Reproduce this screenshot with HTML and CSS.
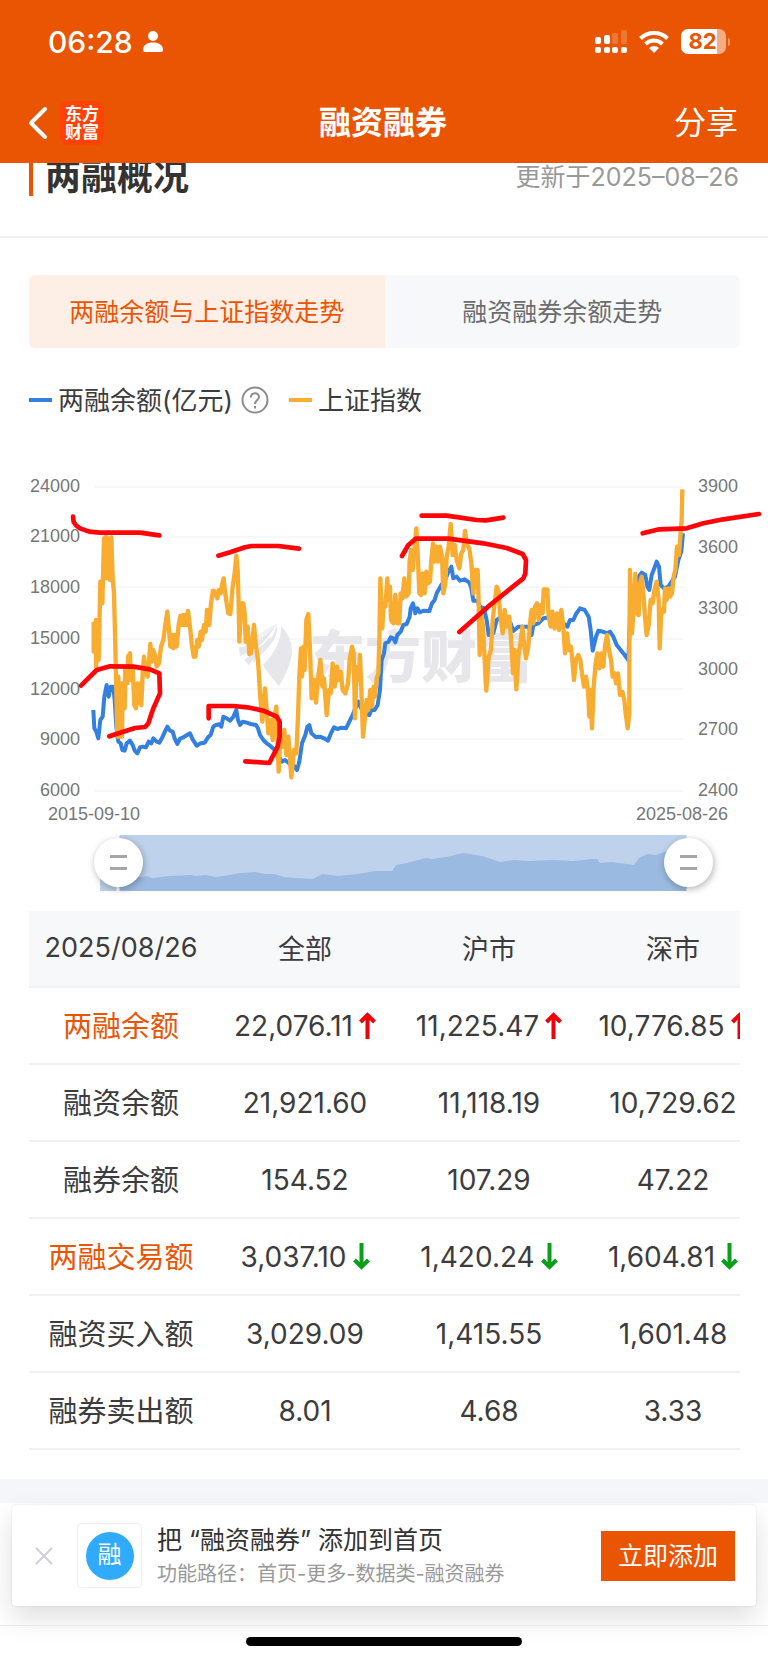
FILE: index.html
```html
<!DOCTYPE html>
<html lang="zh-CN">
<head>
<meta charset="utf-8">
<meta name="viewport" content="width=device-width, initial-scale=1">
<title>融资融券</title>
<link rel="stylesheet" href="styles.css">
</head>
<body>
<header class="top">
  <div class="status">
    <div class="status-side">
      <span class="time">06:28</span>
      <svg width="20" height="21" viewBox="0 0 20 21" fill="#fff" aria-hidden="true"><circle cx="10" cy="5" r="5"/><path d="M0 19C0 14 4 11.500 10 11.500S20 14 20 19Q20 21 18 21H2Q0 21 0 19Z"/></svg>
    </div>
    <div class="status-side status-right">
      <svg width="32" height="24" viewBox="0 0 32 24" fill="#fff" aria-hidden="true">
        <rect x="0" y="7" width="6" height="7" rx="2"/><rect x="9" y="5" width="6" height="9" rx="2"/>
        <g opacity=".2"><rect x="17" y="3" width="6" height="11" rx="2"/><rect x="26" y="0" width="6" height="14" rx="2"/></g>
        <rect x="0" y="17" width="6" height="6" rx="2"/><rect x="9" y="17" width="6" height="6" rx="2"/><rect x="17" y="17" width="6" height="6" rx="2"/><rect x="26" y="17" width="6" height="6" rx="2"/>
      </svg>
      <svg width="30" height="22" viewBox="0 0 30 22" aria-hidden="true"><g fill="none" stroke="#fff" stroke-width="4"><path d="M1.500 7.500C9 .300 21 .300 28.500 7.500"/><path d="M6.500 13C11.500 8.300 18.500 8.300 23.500 13"/></g><path d="M10 17C13 14.300 17 14.300 20 17L15 22Z" fill="#fff"/></svg>
      <span class="battery"><span class="battery-body">82</span><span class="battery-tip"></span></span>
    </div>
  </div>
  <nav class="nav">
    <div class="nav-left">
      <button class="plain" type="button" aria-label="返回"><svg width="20" height="34" viewBox="0 0 20 34" fill="none" stroke="#fff" stroke-width="4" stroke-linecap="round" stroke-linejoin="round"><path d="M17 3 3 17 17 31"/></svg></button>
      <span class="brand">东方<br>财富</span>
    </div>
    <h1 class="nav-title">融资融券</h1>
    <button class="plain share" type="button">分享</button>
  </nav>
</header>

<main>
  <section class="overview">
    <h2 class="overview-title">两融概况</h2>
    <span class="updated">更新于2025–08–26</span>
  </section>

  <div class="content">
    <div class="tabs" role="tablist">
      <button class="tab tab-active" type="button" role="tab" aria-selected="true">两融余额与上证指数走势</button>
      <button class="tab" type="button" role="tab" aria-selected="false">融资融券余额走势</button>
    </div>
    <div class="legend">
      <span class="key key-blue"></span><span class="legend-text">两融余额(亿元)</span>
      <svg class="help" width="28" height="28" viewBox="0 0 28 28" fill="none" stroke="#8c8c8c" stroke-width="2" aria-hidden="true"><circle cx="14" cy="14" r="12.500"/><path d="M10 11.500C10 6 18 6 18 11C18 14 14 14 14 18"/><path d="M14 20V22.500"/></svg>
      <span class="key key-gold"></span><span class="legend-text">上证指数</span>
    </div>
  </div>

  <div class="chart">
    <svg class="chart-svg" viewBox="0 0 768 440" role="img" aria-label="两融余额与上证指数走势">
      <g stroke="#f5f5f6" stroke-width="1.500"><path d="M95 27H683M95 77H683M95 127H683M95 179H683M95 229H683M95 279H683M95 331H683"/></g>
      <g fill="#e6e6eb">
        <path d="M239 187Q252 187 262 178Q271 171 275 165Q269 181 251 191Q246 194 240 196Z"/>
        <path d="M241 179Q255 178 265 170Q273 165 277 164Q270 176 254 183Q248 187 239 184Z" opacity=".5"/>
        <path d="M277 165Q279 178 263 193Q255 200 254 204Q251 198 259 191Q273 180 277 165Z"/>
        <path d="M281 166Q291 176 292 190Q292 204 279 226Q266 211 263 205Q282 186 281 166Z"/>
        <path d="M244 200Q261 188 271 176Q267 190 256 197Q249 204 250 206Z"/>
        <text class="watermark" x="309" y="217">东方财富</text>
      </g>
      <g fill="none" stroke-linejoin="round" transform="scale(.33333)">
        <polyline stroke="#3380e0" stroke-width="12" points="280,750 283,805 289,815 295,835 301,780 308,770 313,710 320,675 326,710 332,680 340,680 344,720 349,800 355,845 362,850 367,870 374,872 380,850 390,842 398,855 404,872 412,880 420,862 430,860 438,862 446,845 454,850 460,835 470,845 478,848 488,830 496,812 502,800 510,812 518,815 524,835 532,852 540,836 550,832 560,826 570,820 578,838 590,857 602,850 614,848 624,832 632,825 640,800 648,795 658,793 664,800 670,770 680,775 690,782 700,770 709,750 714,780 720,795 728,785 740,788 752,792 768,795 774,805 780,825 790,840 800,850 810,857 822,868 835,885 845,905 855,900 868,910 880,915 891,930 898,905 906,850 916,825 922,800 928,795 934,820 948,832 960,830 972,835 984,842 992,822 1002,802 1012,807 1025,803 1038,805 1048,785 1058,765 1066,745 1075,725 1090,760 1108,765 1114,750 1124,750 1133,735 1140,690 1145,600 1152,580 1156,550 1166,545 1172,532 1180,535 1186,547 1192,525 1202,515 1210,495 1220,492 1229,470 1232,445 1239,430 1246,460 1252,445 1260,457 1270,452 1288,453 1296,430 1304,420 1310,400 1324,375 1335,360 1348,330 1354,320 1360,355 1370,350 1380,362 1394,358 1408,368 1414,385 1420,422 1432,422 1440,440 1452,445 1460,480 1466,525 1480,520 1490,480 1505,470 1520,480 1532,490 1540,513 1555,500 1570,500 1585,500 1595,525 1600,495 1615,490 1630,475 1650,472 1670,490 1690,490 1702,500 1710,480 1720,480 1728,462 1740,445 1754,450 1766,470 1772,510 1778,572 1788,530 1795,512 1810,515 1820,520 1830,515 1840,530 1850,555 1862,570 1874,585 1885,600 1890,480 1905,390 1916,350 1925,338 1936,345 1942,380 1948,390 1955,345 1963,325 1970,305 1977,320 1982,375 1992,385 2005,380 2015,365 2025,350 2035,300 2044,275 2049,220"/>
        <polyline stroke="#f8ac30" stroke-width="13" points="281,485 281,575 288,480 288,620 296,510 296,600 301,365 307,430 312,235 318,230 320,355 326,235 330,360 334,232 338,355 342,400 346,560 352,830 355,650 358,830 362,670 366,830 368,670 374,745 376,620 382,670 384,590 390,580 393,660 398,620 403,735 408,745 412,670 416,730 420,670 424,735 428,640 432,590 437,640 443,650 451,552 455,605 460,570 466,590 470,620 477,610 483,560 490,540 496,495 502,455 507,510 511,560 516,525 520,565 525,525 530,560 536,495 541,468 546,495 549,465 553,495 557,465 560,495 564,453 570,500 575,550 581,590 586,590 592,540 596,560 602,515 606,540 612,495 617,515 621,450 628,495 633,430 639,392 645,395 652,415 657,390 662,400 666,375 671,355 675,395 680,430 685,460 691,462 698,380 704,340 709,287 713,330 716,430 718,545 724,430 730,430 734,460 737,545 743,500 748,582 753,580 757,545 762,495 768,560 774,600 780,700 787,785 795,685 800,750 805,820 812,780 818,840 824,770 829,740 836,935 840,850 847,860 853,810 859,885 865,830 874,952 882,870 889,880 894,770 898,650 903,565 906,650 911,560 914,630 919,480 925,462 930,570 935,715 942,660 948,728 954,660 961,600 967,680 972,655 980,765 987,690 992,700 998,610 1004,680 1011,620 1016,660 1022,635 1028,690 1036,700 1044,670 1049,600 1056,560 1061,580 1065,775 1070,620 1075,660 1080,585 1086,740 1089,830 1095,770 1100,720 1105,750 1111,690 1116,740 1121,680 1125,710 1130,655 1135,640 1138,540 1141,355 1147,505 1151,430 1156,440 1162,355 1166,420 1170,380 1173,480 1180,490 1186,405 1192,490 1198,490 1202,400 1207,415 1213,355 1218,410 1226,400 1229,300 1234,270 1238,330 1244,260 1249,205 1254,300 1258,400 1263,405 1268,340 1274,400 1279,335 1284,370 1290,365 1294,300 1299,250 1304,305 1309,260 1314,305 1320,260 1326,290 1330,400 1336,370 1340,290 1346,260 1352,192 1358,285 1364,255 1370,300 1378,325 1384,280 1390,270 1395,213 1401,255 1408,265 1414,310 1420,400 1426,330 1433,330 1436,430 1439,585 1444,460 1449,500 1454,600 1459,692 1466,590 1473,570 1478,480 1484,430 1490,380 1496,395 1500,460 1508,520 1514,450 1520,500 1528,470 1534,550 1539,640 1544,570 1549,688 1555,590 1561,550 1567,500 1573,560 1578,595 1585,560 1590,490 1595,450 1600,490 1605,440 1611,430 1616,480 1623,435 1628,460 1631,388 1642,388 1646,470 1652,500 1657,455 1664,505 1671,460 1677,510 1684,450 1690,500 1695,580 1701,520 1707,570 1713,560 1717,600 1722,660 1728,600 1735,585 1741,600 1746,640 1752,680 1758,650 1764,690 1768,770 1771,690 1776,805 1781,680 1787,610 1792,580 1798,625 1804,580 1810,620 1815,560 1821,525 1827,570 1833,600 1838,650 1844,640 1848,670 1854,640 1860,705 1867,695 1873,720 1877,760 1883,805 1888,760 1888,560 1890,330 1896,520 1902,430 1906,342 1910,460 1916,465 1920,370 1925,350 1930,400 1935,470 1940,525 1946,495 1952,420 1958,430 1963,390 1970,365 1976,420 1979,565 1984,450 1992,455 1995,385 2000,420 2005,385 2010,410 2016,400 2021,350 2026,330 2031,260 2037,285 2041,230 2045,180 2047,88"/>
        <g stroke="#fd0509" stroke-width="14" stroke-linecap="round">
          <polyline points="219,170 221,186 229,197 240,205 268,215 300,218 420,218 478,226"/>
          <polyline points="243,677 290,630 330,619 400,620 450,628 478,640 480,700 460,745 445,790 435,801 405,804 328,829"/>
          <polyline points="655,287 690,277 735,262 755,258 835,258 897,266"/>
          <polyline points="626,775 626,738 700,738 742,742 790,752 830,770 839,785 839,830 833,860 808,909 736,904"/>
          <polyline points="1265,167 1340,167 1430,180 1458,181 1510,173"/>
          <polyline points="1206,288 1225,255 1248,236 1345,236 1450,250 1520,264 1568,282 1578,300 1576,340 1570,355 1470,435 1378,516"/>
          <polyline points="1928,220 1978,208 2060,205 2110,190 2170,178 2277,162"/>
        </g>
      </g>
      <g class="axis" text-anchor="end">
        <text x="80" y="32">24000</text><text x="80" y="82">21000</text><text x="80" y="133">18000</text><text x="80" y="184">15000</text><text x="80" y="235">12000</text><text x="80" y="285">9000</text><text x="80" y="336">6000</text>
      </g>
      <g class="axis">
        <text x="698" y="32">3900</text><text x="698" y="93">3600</text><text x="698" y="154">3300</text><text x="698" y="215">3000</text><text x="698" y="275">2700</text><text x="698" y="336">2400</text>
        <text x="48" y="360">2015-09-10</text><text x="636" y="360">2025-08-26</text>
      </g>
      <path fill="#bfd2ec" d="M118 375H688V431H118Z"/>
      <path fill="#bcd0e6" d="M100 416H118V431H100Z"/>
      <path fill="#9abae1" d="M118 418L143 417 147 416 152 418 169 416 191 415 196 416 206 415 216 417 230 415 240 413 255 412 265 414 274 414 284 417 296 418 313 419 322 414 338 416 358 414 375 411 392 411 396 405 407 403 426 398 433 399 451 396 463 393 482 396 500 402 514 400 529 401 553 400 573 401 592 399 597 399 600 403 612 402 634 405 639 398 647 394 656 395 664 392 688 390V431H118Z"/>
      <path stroke="#fff" stroke-width="3" d="M118 375V431M688 375V431"/>
    </svg>
    <input class="range" type="range" min="0" max="100" value="0" aria-label="开始日期">
    <input class="range" type="range" min="0" max="100" value="100" aria-label="结束日期">
  </div>

  <div class="table-wrap">
    <table class="data">
      <thead><tr><th scope="col">2025/08/26</th><th scope="col">全部</th><th scope="col">沪市</th><th scope="col">深市</th></tr></thead>
      <tbody>
        <tr><th class="hot" scope="row">两融余额</th>
          <td>22,076.11<svg class="arrow up" viewBox="0 0 17 27"><path d="M8.500 27V3M1.500 10 8.500 3 15.500 10"/></svg></td>
          <td>11,225.47<svg class="arrow up" viewBox="0 0 17 27"><path d="M8.500 27V3M1.500 10 8.500 3 15.500 10"/></svg></td>
          <td>10,776.85<svg class="arrow up" viewBox="0 0 17 27"><path d="M8.500 27V3M1.500 10 8.500 3 15.500 10"/></svg></td></tr>
        <tr><th scope="row">融资余额</th><td>21,921.60</td><td>11,118.19</td><td>10,729.62</td></tr>
        <tr><th scope="row">融券余额</th><td>154.52</td><td>107.29</td><td>47.22</td></tr>
        <tr><th class="hot" scope="row">两融交易额</th>
          <td>3,037.10<svg class="arrow down" viewBox="0 0 17 27"><path d="M8.500 0V24M1.500 17 8.500 24 15.500 17"/></svg></td>
          <td>1,420.24<svg class="arrow down" viewBox="0 0 17 27"><path d="M8.500 0V24M1.500 17 8.500 24 15.500 17"/></svg></td>
          <td>1,604.81<svg class="arrow down" viewBox="0 0 17 27"><path d="M8.500 0V24M1.500 17 8.500 24 15.500 17"/></svg></td></tr>
        <tr><th scope="row">融资买入额</th><td>3,029.09</td><td>1,415.55</td><td>1,601.48</td></tr>
        <tr><th scope="row">融券卖出额</th><td>8.01</td><td>4.68</td><td>3.33</td></tr>
      </tbody>
    </table>
  </div>
  <div class="divider"></div>
</main>

<aside class="promo">
  <button class="plain" type="button" aria-label="关闭"><svg width="18" height="18" viewBox="0 0 18 18" fill="none" stroke="#cfd0d8" stroke-width="2"><path d="M1 1 17 17M17 1 1 17"/></svg></button>
  <span class="promo-icon"><span class="promo-dot">融</span></span>
  <div class="promo-text">
    <p class="promo-title">把 “融资融券” 添加到首页</p>
    <p class="promo-path">功能路径：首页-更多-数据类-融资融券</p>
  </div>
  <button class="add" type="button">立即添加</button>
</aside>
<footer class="home"><span class="home-bar"></span></footer>
</body>
</html>
```
FILE: styles.css
```css
* { box-sizing: border-box; }
body {
  margin: 0;
  background: #fff;
  color: #3c3c3e;
  font-family: Inter, "Noto Sans CJK SC", sans-serif;
}
h1, h2, p { margin: 0; }
button { font-family: inherit; border: 0; cursor: pointer; }
svg { display: block; }
.plain { background: none; padding: 0; color: inherit; }

.top { position: sticky; top: 0; z-index: 2; background: #ea5504; color: #fff; }
.status { display: flex; justify-content: space-between; height: 83px; padding: 0 38px 0 48px; align-items: center; }
.status-side { display: flex; align-items: center; gap: 10px; }
.status-right { gap: 12px; }
.time { font-size: 30px; font-weight: 500; }
.battery { display: flex; align-items: center; gap: 2px; }
.battery-body {
  width: 45px; height: 25px; padding-right: 2px; border-radius: 7px; text-align: center;
  background: linear-gradient(90deg, #fff 80%, #f6ad84 80%);
  color: #ea5504; font-size: 22px; line-height: 25px; font-weight: 700;
}
.battery-tip { width: 2px; height: 8px; border-radius: 0 2px 2px 0; background: #f39a68; }
.nav { display: grid; grid-template-columns: 1fr auto 1fr; align-items: center; height: 80px; padding: 0 30px 0 28px; }
.nav-left { display: flex; align-items: center; gap: 12px; }
.brand {
  width: 44px; height: 44px; padding-top: 4px; border-radius: 8px; background: #ff4206; text-align: center;
  font-size: 17px; line-height: 18px; font-weight: 700;
}
.nav-title { font-size: 32px; line-height: 40px; font-weight: 700; }
.share { justify-self: end; font-size: 32px; line-height: 40px; }

.overview {
  display: flex; align-items: center; justify-content: space-between;
  height: 123px; margin-top: -48px; padding: 2px 29px 0; border-bottom: 2px solid #f1f1f2;
}
.overview-title { padding-left: 12px; border-left: 4px solid #ea5504; font-size: 36px; line-height: 38px; font-weight: 700; color: #333; }
.updated { font-size: 25px; line-height: 32px; color: #999; }

.content { padding: 37px 28px 0 29px; }
.tabs { display: grid; grid-template-columns: 1fr 1fr; height: 73px; border-radius: 6px; overflow: hidden; }
.tab { padding: 0 0 3px; background: #f7f8fa; color: #6c6c6e; font-size: 25px; }
.tab-active { background: #fdeee6; color: #ea5504; }
.legend { display: flex; align-items: center; height: 104px; font-size: 26px; }
.legend-text { padding-bottom: 3px; }
.key { width: 23px; height: 4px; margin-right: 6px; }
.key-blue { background: #3380e0; }
.key-gold { background: #f8ac30; }
.help { margin: 0 20px 0 8px; }

.chart { position: relative; }
.chart-svg { width: 100%; height: auto; margin-top: 8px; }
.axis { font-family: "Liberation Sans", Arial, sans-serif; font-size: 18px; fill: #777; }
.watermark { font-size: 56px; font-weight: 900; }
.range {
  position: absolute; left: 12.2%; bottom: 6px; width: 80.6%; height: 63px; margin: 0;
  appearance: none; background: none; pointer-events: none;
}
.range::-webkit-slider-runnable-track { background: none; }
.range::-webkit-slider-thumb {
  appearance: none; width: 49px; height: 49px; border: 0; border-radius: 50%; pointer-events: auto;
  background:
    linear-gradient(#a5a6a9, #a5a6a9) 50% 17px / 17px 3px no-repeat,
    linear-gradient(#a5a6a9, #a5a6a9) 50% 29px / 17px 3px no-repeat,
    #fff;
  box-shadow: 1px 2px 7px rgba(0, 0, 0, .3);
}

.table-wrap { margin: 11px 28px 0 29px; overflow: hidden; }
.data { width: 736px; min-width: 100%; table-layout: fixed; border-collapse: collapse; font-size: 28px; }
.data th, .data td { height: 77px; padding: 0; border-bottom: 2px solid #f1f1f2; text-align: center; font-weight: 400; white-space: nowrap; }
.data th { padding-bottom: 3px; font-size: 29px; }
.data thead th { height: 76px; background: #f7f8fa; font-size: 27px; }
.data .hot { color: #ea5504; }
.arrow { display: inline-block; width: 17px; height: 27px; margin-left: 6px; vertical-align: -3px; fill: none; stroke-width: 4; }
.up { stroke: #f00008; }
.down { stroke: #0b9e18; }
.divider { height: 24px; margin-top: 29px; background: #f5f6f9; }

.promo {
  display: flex; align-items: center; height: 101px; margin: 2px 12px 0; padding: 0 21px 0 23px;
  border-radius: 4px; background: #fff; box-shadow: 0 12px 28px rgba(0, 0, 0, .13), 0 0 2px rgba(0, 0, 0, .12);
}
.promo-icon { display: grid; place-items: center; width: 65px; height: 65px; margin: 0 15px 0 24px; border: 1px solid #f0f0f1; border-radius: 4px; }
.promo-dot { width: 48px; height: 48px; border-radius: 50%; background: #30aafb; color: #fff; font-size: 24px; line-height: 46px; text-align: center; }
.promo-text { flex: 1; white-space: nowrap; }
.promo-title { font-size: 25px; line-height: 36px; color: #333; }
.promo-path { font-size: 20px; line-height: 32px; color: #999; }
.add { width: 134px; height: 50px; padding: 0 0 3px; background: #ea5504; color: #fff; font-size: 25px; }
.home { display: flex; justify-content: center; height: 38px; margin-top: 19px; padding-top: 11px; border-top: 1px solid #e8e8e8; }
.home-bar { width: 36%; height: 9px; border-radius: 5px; background: #000; }
```
